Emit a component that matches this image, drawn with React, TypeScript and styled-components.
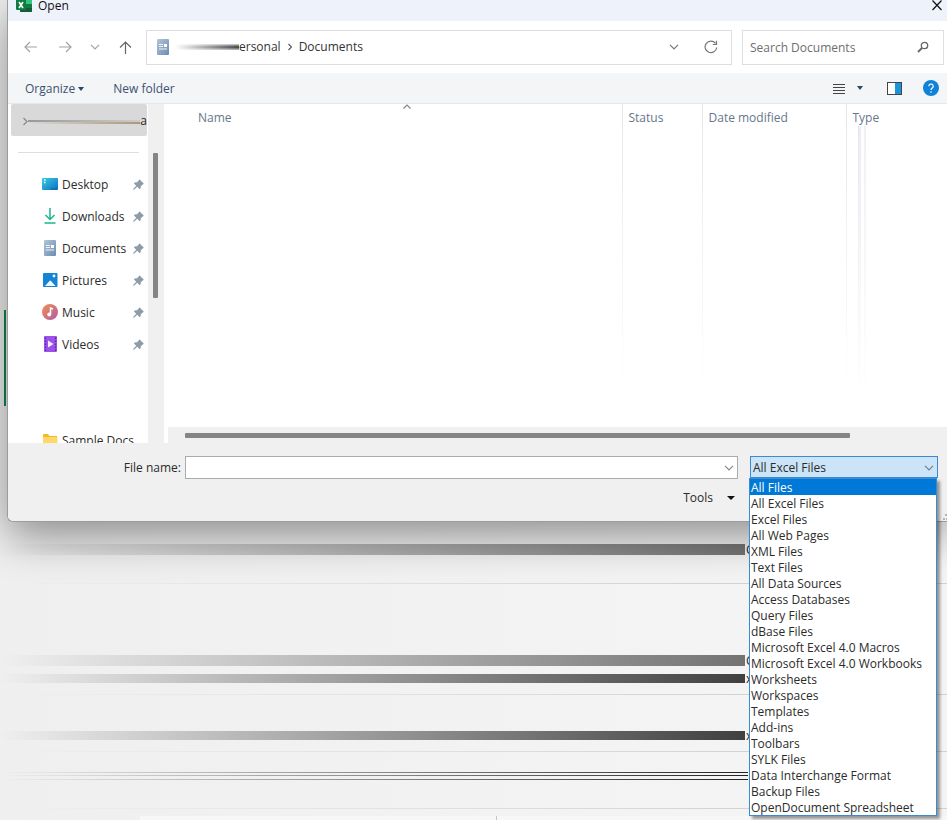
import React from "react";
import styled, { createGlobalStyle } from "styled-components";

const GlobalStyle = createGlobalStyle`
  * { box-sizing: border-box; }
  body {
    margin: 0;
    background: #f2f2f2;
    font-family: "Open Sans", "Noto Sans", sans-serif;
    font-size: 12px;
    line-height: 16px;
    color: #2b2b2b;
  }
  button, input, select { font: inherit; color: inherit; }
  svg { display: block; flex: none; }
`;

const Page = styled.div`
  min-height: 100vh;
  display: flex;
  flex-direction: column;
  overflow: hidden;
  background: linear-gradient(90deg, #efefef, #f4f4f4 80%);
`;

const WindowRow = styled.div`
  display: flex;
`;

const Gutter = styled.div`
  width: 7px;
  display: flex;
  align-items: flex-start;
  justify-content: flex-end;
  padding: 310px 1px 0 0;
`;

const SelectionEdge = styled.div`
  position: relative;
  z-index: 3;
  width: 2px;
  height: 96px;
  background: #0f6b3c;
`;

const Dialog = styled.main`
  position: relative;
  z-index: 2;
  flex: 1;
  min-width: 0;
  background: #fff;
  border-left: 1px solid #9c9c9c;
  border-bottom: 1px solid #9c9c9c;
  border-bottom-left-radius: 6px;
  box-shadow: 0 14px 44px rgba(0, 0, 0, 0.42);
`;

const TitleBar = styled.header`
  display: flex;
  align-items: flex-start;
  height: 21px;
  padding: 0 5px 0 8px;
  background: #eef2fa;
  color: #111;
`;

const Title = styled.h1`
  flex: 1;
  margin: 0 0 0 6px;
  font-size: 12px;
  line-height: 12px;
  font-weight: 400;
`;

const IconButton = styled.button<{ $w?: number }>`
  display: flex;
  flex: none;
  align-items: center;
  justify-content: center;
  width: ${(p) => (p.$w ? `${p.$w}px` : "auto")};
  padding: 0;
  border: 0;
  background: none;
`;

const NavBar = styled.nav`
  display: flex;
  align-items: center;
  height: 52px;
  padding: 0 3px 0 6px;
`;

const NavButtons = styled.div`
  display: flex;
`;

const FieldBox = styled.div<{ $grow?: boolean }>`
  display: flex;
  align-items: center;
  height: 35px;
  border: 1px solid #dedede;
  background: #fff;
  ${(p) =>
    p.$grow
      ? "flex: 1; margin: 0 10px 0 2px; padding-left: 8px;"
      : "width: 202px; padding: 0 14px 0 7px;"}
`;

const Crumb = styled.a`
  color: #333;
  text-decoration: none;
`;

const CrumbSmear = styled.div`
  width: 64px;
  height: 6px;
  margin-left: 4px;
  background: linear-gradient(90deg, transparent, #333);
  mask-image: linear-gradient(180deg, rgba(0, 0, 0, 0.2), #000 50%, rgba(0, 0, 0, 0.3));
`;

const Breadcrumbs = styled.div`
  display: flex;
  flex: 1;
  align-items: center;
  gap: 7px;
`;

const SearchInput = styled.input`
  flex: 1;
  min-width: 0;
  padding: 2px 0 0;
  border: 0;
  outline: 0;
  background: none;
  &::placeholder {
    color: #6e6e6e;
    opacity: 1;
  }
`;

const Toolbar = styled.div`
  display: flex;
  align-items: center;
  height: 31px;
  padding: 0 4px 0 17px;
  background: #f4f5f7;
  border-bottom: 1px solid #e6e8eb;
`;

const TextButton = styled.button<{ $dark?: boolean }>`
  display: flex;
  align-items: center;
  gap: ${(p) => (p.$dark ? 14 : 3)}px;
  padding: ${(p) => (p.$dark ? 0 : 2)}px 0 0;
  border: 0;
  background: none;
  color: ${(p) => (p.$dark ? "#2b2b2b" : "#3c5273")};
`;

const ToolbarStart = styled.div`
  display: flex;
  flex: 1;
  gap: 29px;
`;

const ToolbarEnd = styled.div`
  display: flex;
  align-items: center;
`;

const Body = styled.div`
  display: flex;
  height: 339px;
`;

const Sidebar = styled.aside`
  width: 140px;
  overflow: hidden;
`;

const CurrentFolder = styled.button`
  display: flex;
  align-items: center;
  width: 136px;
  height: 32px;
  margin-left: 3px;
  padding: 2px 0 0 12px;
  border: 0;
  border-radius: 2px;
  background: #d9d9d9;
`;

const FolderSmear = styled.span`
  flex: 1;
  height: 5px;
  background:
    linear-gradient(90deg, #999, #ccc) 0 1px / 100% 2px no-repeat,
    linear-gradient(90deg, #d9d9d9, #ab9a78) 0 3px / 100% 2px no-repeat;
`;

const Separator = styled.hr`
  height: 1px;
  margin: 16px 9px 15px 10px;
  border: 0;
  background: #dedede;
`;

const PlaceList = styled.ul`
  margin: 0;
  padding: 0;
  list-style: none;
`;

const PlaceItem = styled.li<{ $gap?: boolean }>`
  margin-top: ${(p) => (p.$gap ? 64 : 0)}px;
`;

const PlaceLink = styled.a`
  display: flex;
  align-items: center;
  height: 32px;
  padding: 0 4px 0 34px;
  gap: 4px;
  color: #2b2b2b;
  text-decoration: none;
`;

const PlaceName = styled.span`
  flex: 1;
  min-width: 0;
  padding-top: 2px;
  white-space: nowrap;
`;

const ScrollStrip = styled.div`
  width: 16px;
  padding: 49px 5px 0;
  background: #f0f0f0;
`;

const VerticalThumb = styled.div`
  width: 5px;
  height: 145px;
  background: #858585;
  border-radius: 1px;
`;

const FilePane = styled.section`
  display: flex;
  flex: 1;
  flex-direction: column;
  min-width: 0;
  margin-left: 4px;
`;

const FileTable = styled.table`
  width: 100%;
  table-layout: fixed;
  border-collapse: collapse;
`;

const TableArea = styled.div`
  height: 323px;
`;

const HeadCell = styled.th<{ $line?: boolean }>`
  position: relative;
  height: 22px;
  padding: 6px 0 0 6px;
  line-height: 16px;
  border-left: ${(p) => (p.$line ? "1px solid #e8e8e8" : "0")};
  color: #67778a;
  font-weight: 400;
  text-align: left;
  vertical-align: top;
`;

const SortMark = styled.span`
  position: absolute;
  top: 0;
  left: 50%;
  margin-left: -4px;
`;

const EmptyCell = styled.td<{ $line?: boolean; $smear?: boolean }>`
  height: 270px;
  padding: 0;
  background-repeat: no-repeat;
  background-image: ${(p) =>
    [
      p.$line || p.$smear ? "linear-gradient(#e8e8e8, #fff)" : "",
      p.$smear ? "linear-gradient(#e9e4e8, #fff), linear-gradient(#e8eef6, #fff), linear-gradient(#f0f0f0, #fff)" : "",
    ]
      .filter(Boolean)
      .join(", ") || "none"};
  background-size: 1px 100%, 1px 100%, 2px 100%, 2px 100%;
  background-position: 0 0, 12px 0, 13px 0, 18px 0;
`;

const HorizontalStrip = styled.div`
  height: 16px;
  padding: 6px 97px 0 17px;
  background: #f0f0f0;
`;

const HorizontalThumb = styled.div`
  height: 5px;
  background: #858585;
  border-radius: 1px;
`;

const Footer = styled.footer`
  position: relative;
  height: 78px;
  padding: 13px 9px 0 0;
  background: #f0f0f0;
  border-bottom-left-radius: 6px;
`;

const FooterRow = styled.div`
  display: flex;
`;

const FileLabel = styled.label`
  width: 177px;
  padding-right: 4px;
  line-height: 23px;
  text-align: right;
`;

const NameBox = styled.div`
  display: flex;
  flex: 1;
  height: 23px;
  margin-right: 12px;
  padding-right: 3px;
  border: 1px solid #ababab;
  background: #fff;
`;

const NameInput = styled.input`
  flex: 1;
  min-width: 0;
  padding: 0 4px;
  border: 0;
  outline: 0;
  background: none;
`;

const TypePicker = styled.div`
  position: relative;
  width: 188px;
`;

const TypeSelect = styled.select`
  display: block;
  width: 100%;
  height: 22px;
  padding: 2px 20px 0 2px;
  border: 1px solid #3c8ad0;
  border-radius: 0;
  outline: 0;
  appearance: none;
  background: #cce4f7;
`;

const SelectArrow = styled.span`
  position: absolute;
  top: 9px;
  right: 4px;
  pointer-events: none;
`;

const TypeList = styled.ul`
  position: absolute;
  top: 22px;
  left: -1px;
  width: 100%;
  margin: 0;
  padding: 0;
  border: 1px solid #3c8ad0;
  background: #fff;
  box-shadow: 3px 3px 3px rgba(0, 0, 0, 0.4);
  list-style: none;
`;

const TypeOption = styled.li<{ $active?: boolean }>`
  height: 16px;
  padding-left: 1px;
  line-height: 18px;
  white-space: nowrap;
  background: ${(p) => (p.$active ? "#0078d7" : "transparent")};
  color: ${(p) => (p.$active ? "#fff" : "#2b2b2b")};
`;

const ToolsRow = styled.div`
  display: flex;
  justify-content: flex-end;
  padding: 11px 203px 0 0;
`;

const Grip = styled.span`
  position: absolute;
  right: 0;
  bottom: 1px;
`;

const Sheet = styled.section`
  position: relative;
  z-index: 1;
  flex: 1;
  display: flex;
  flex-direction: column;
`;

const SheetRow = styled.div<{ $h: number; $top: number }>`
  display: flex;
  flex-direction: column;
  gap: 8px;
  height: ${(p) => p.$h}px;
  padding-top: ${(p) => p.$top}px;
  background: linear-gradient(90deg, transparent, #d2d2d2 80%) 0 100% / 100% 1px no-repeat;
`;

const SmearRow = styled.div<{ $h: number }>`
  display: flex;
  align-items: center;
  height: ${(p) => p.$h}px;
`;

const Smear = styled.div<{ $tone: string }>`
  flex: 1;
  height: 100%;
  background: linear-gradient(90deg, transparent, ${(p) => p.$tone});
`;

const CutLetter = styled.span`
  width: 202px;
  padding-left: 1px;
  line-height: 18px;
  color: #222;
`;

const Strokes = styled.div`
  height: 8px;
  margin-right: 199px;
  background:
    linear-gradient(90deg, transparent, #222) 0 0 / 100% 1px no-repeat,
    linear-gradient(90deg, transparent, #222) 0 3px / 100% 1px no-repeat,
    linear-gradient(90deg, transparent, #222) 0 7px / 100% 1px no-repeat;
`;

const LowerPanel = styled.div`
  display: flex;
  flex: 1;
  min-height: 4px;
  margin: 7px 0 0 140px;
  background: #f7f7f7;
`;

const PanelColumn = styled.div`
  width: 357px;
  border-right: 1px solid #c4c4c4;
`;

const ExcelLogo = () => (
  <svg width="16" height="12" viewBox="0 4 16 12" aria-hidden="true">
    <rect x="4" y="0" width="12" height="16" rx="1" fill="#21a366" />
    <path d="M10 0h5a1 1 0 0 1 1 1v7h-6z" fill="#33c481" />
    <path d="M10 8h6v4h-6z" fill="#107c41" />
    <path d="M4 12h12v3a1 1 0 0 1-1 1H5a1 1 0 0 1-1-1z" fill="#185c37" />
    <rect x="0" y="3" width="10" height="11" rx="1" fill="#107c41" />
    <path d="M3 6l4 6M7 6l-4 6" stroke="#fff" strokeWidth="1.6" />
  </svg>
);

const Stroke = ({ w, h, d, color = "#777", sw = 1.2 }: { w: number; h: number; d: string; color?: string; sw?: number }) => (
  <svg width={w} height={h} viewBox={`0 0 ${w} ${h}`} fill="none" stroke={color} strokeWidth={sw} aria-hidden="true">
    <path d={d} />
  </svg>
);

const ChevronDown = ({ color }: { color?: string }) => <Stroke w={10} h={6} d="M1 .8l4 4 4-4" color={color} />;

const Caret = ({ color, w = 6 }: { color: string; w?: number }) => (
  <svg width={w} height="4" viewBox="0 0 8 4" preserveAspectRatio="none" aria-hidden="true">
    <path d="M0 0h8L4 4z" fill={color} />
  </svg>
);

const DocumentIcon = () => (
  <svg width="16" height="16" viewBox="0 0 16 16" aria-hidden="true">
    <defs>
      <linearGradient id="doc" x1="0" y1="0" x2="1" y2="1">
        <stop offset="0" stopColor="#b3c5d8" />
        <stop offset="1" stopColor="#6b8cb2" />
      </linearGradient>
    </defs>
    <rect x="2" y="0" width="12" height="16" rx="1" fill="url(#doc)" />
    <path d="M4 5.500h4M4 7.500h4M4 10h8" stroke="#eef3f8" strokeWidth="1.200" />
    <rect x="9" y="5" width="3" height="3" fill="#fff" />
  </svg>
);

const DesktopIcon = () => (
  <svg width="16" height="16" viewBox="0 0 16 16" aria-hidden="true">
    <defs>
      <linearGradient id="desk" x1="0" y1="0" x2="1" y2="1">
        <stop offset="0" stopColor="#35d0e0" />
        <stop offset="1" stopColor="#0f6cc4" />
      </linearGradient>
    </defs>
    <rect x="0" y="2" width="16" height="12" rx="1" fill="url(#desk)" />
    <path d="M2 4h1.500M2 6.500h1.500" stroke="#fff" strokeWidth="1.400" />
    <path d="M9 13h1.500M11.500 13h1M13.500 13h1" stroke="#0b4d92" />
  </svg>
);

const DownloadIcon = () => (
  <svg width="16" height="16" viewBox="0 0 16 16" fill="none" stroke="#1db58c" strokeWidth="1.500" aria-hidden="true">
    <path d="M8 0v11.500M3.500 7L8 11.500 12.500 7M2.500 15h11" />
  </svg>
);

const PictureIcon = () => (
  <svg width="16" height="16" viewBox="0 0 16 16" aria-hidden="true">
    <rect x="1" y="1" width="14.500" height="14" rx="1" fill="#1484d6" />
    <path d="M3 14l4.500-5a1 1 0 0 1 1.500 0L13.500 14z" fill="#f2f8fd" />
    <circle cx="12" cy="4" r="1.400" fill="#fff" />
  </svg>
);

const MusicIcon = () => (
  <svg width="16" height="16" viewBox="0 0 16 16" aria-hidden="true">
    <defs>
      <linearGradient id="music" x1="0" y1="0" x2="1" y2="1">
        <stop offset="0" stopColor="#f09050" />
        <stop offset="1" stopColor="#b45aa8" />
      </linearGradient>
    </defs>
    <circle cx="8" cy="8" r="8" fill="url(#music)" />
    <path d="M8.500 10.500V4l2.500 1" fill="none" stroke="#fff" strokeWidth="1.500" />
    <circle cx="7.200" cy="10.500" r="1.900" fill="#fff" />
  </svg>
);

const VideoIcon = () => (
  <svg width="16" height="16" viewBox="0 0 16 16" aria-hidden="true">
    <rect x="2" y="0" width="13" height="16" rx="1" fill="#9a52e8" />
    <path d="M3.500 1.500v14M13.500 1.500v14" stroke="#5a20a8" strokeWidth="1.200" strokeDasharray="1.500 1.500" />
    <path d="M6 4.500L11.500 8 6 11.500z" fill="#f4ecfc" />
  </svg>
);

const FolderIcon = () => (
  <svg width="16" height="16" viewBox="0 0 16 16" aria-hidden="true">
    <path d="M1 3a1 1 0 0 1 1-1h4l1.500 2H15v5H1z" fill="#f5b921" />
    <path d="M1 5h13.500a1 1 0 0 1 1 1v8H1z" fill="#ffd869" />
  </svg>
);

const PinIcon = () => (
  <svg width="11" height="11" viewBox="0 0 11 11" aria-hidden="true">
    <path
      d="M6.300 .3L10.800 4.600 9.800 5.400 7.900 7.200 7.500 9.700 6.300 9.900 4.200 7.800 1 10.800 .2 10.800 .2 10.100 3.200 6.800 1 4.600 1.400 3.500 4.100 3.200 5.700 1.400z"
      fill="#8f9ba6"
    />
  </svg>
);

const places = [
  { name: "Desktop", icon: <DesktopIcon /> },
  { name: "Downloads", icon: <DownloadIcon /> },
  { name: "Documents", icon: <DocumentIcon /> },
  { name: "Pictures", icon: <PictureIcon /> },
  { name: "Music", icon: <MusicIcon /> },
  { name: "Videos", icon: <VideoIcon /> },
];

const fileTypes = [
  "All Files",
  "All Excel Files",
  "Excel Files",
  "All Web Pages",
  "XML Files",
  "Text Files",
  "All Data Sources",
  "Access Databases",
  "Query Files",
  "dBase Files",
  "Microsoft Excel 4.0 Macros",
  "Microsoft Excel 4.0 Workbooks",
  "Worksheets",
  "Workspaces",
  "Templates",
  "Add-ins",
  "Toolbars",
  "SYLK Files",
  "Data Interchange Format",
  "Backup Files",
  "OpenDocument Spreadsheet",
];

export default function App() {
  return (
    <Page>
      <GlobalStyle />
      <WindowRow>
        <Gutter>
          <SelectionEdge />
        </Gutter>
        <Dialog>
          <TitleBar>
            <ExcelLogo />
            <Title>Open</Title>
            <IconButton aria-label="Close">
              <Stroke w={10} h={11} d="M.5 .5l9 9.500M9.500 .5l-9 9.500" color="#111" />
            </IconButton>
          </TitleBar>

          <NavBar>
            <NavButtons>
              <IconButton $w={32} aria-label="Back">
                <Stroke w={13} h={12} d="M13 6H1M6 1L1 6l5 5" color="#a3a3a3" />
              </IconButton>
              <IconButton $w={38} aria-label="Forward">
                <Stroke w={13} h={12} d="M0 6h12M7 1l5 5-5 5" color="#a3a3a3" />
              </IconButton>
              <IconButton $w={22} aria-label="Recent locations">
                <ChevronDown color="#a3a3a3" />
              </IconButton>
              <IconButton $w={38} aria-label="Up">
                <Stroke w={13} h={13} d="M6.500 13V1M1 6.500L6.500 1 12 6.500" color="#666" />
              </IconButton>
            </NavButtons>
            <FieldBox $grow>
              <DocumentIcon />
              <CrumbSmear />
              <Breadcrumbs>
                <Crumb href="#personal">ersonal</Crumb>
                <Stroke w={4} h={8} d="M.5 1l3 3-3 3" color="#555" />
                <Crumb href="#documents">Documents</Crumb>
              </Breadcrumbs>
              <IconButton $w={34} aria-label="Previous locations">
                <ChevronDown />
              </IconButton>
              <IconButton $w={40} aria-label="Refresh">
                <Stroke w={14} h={14} d="M12.700 7.500A5.800 5.800 0 1 1 11.500 3.300M12.500 .8v3.700H8.800" color="#777" />
              </IconButton>
            </FieldBox>
            <FieldBox>
              <SearchInput placeholder="Search Documents" aria-label="Search Documents" />
              <svg width="12" height="12" viewBox="0 0 12 12" fill="none" stroke="#666" aria-hidden="true">
                <circle cx="7.500" cy="4.500" r="3.200" strokeWidth="1.300" />
                <path d="M5 7L1 11" strokeWidth="1.800" />
              </svg>
            </FieldBox>
          </NavBar>

          <Toolbar>
            <ToolbarStart>
              <TextButton>
                Organize
                <Caret color="#2c436a" />
              </TextButton>
              <TextButton>New folder</TextButton>
            </ToolbarStart>
            <ToolbarEnd>
              <IconButton $w={22} aria-label="Change view">
                <Stroke w={12} h={11} d="M0 1.500h12M0 4.500h12M0 7.500h12M0 10.500h12" color="#444" sw={1} />
              </IconButton>
              <IconButton $w={20} aria-label="More view options">
                <Caret color="#2c436a" />
              </IconButton>
              <IconButton $w={48} aria-label="Preview pane">
                <svg width="15" height="13" viewBox="0 0 15 13" aria-hidden="true">
                  <rect x=".5" y=".5" width="14" height="12" fill="#fff" stroke="#444" />
                  <rect x="8" y="1" width="6" height="11" fill="#1a94dc" />
                </svg>
              </IconButton>
              <IconButton $w={25} aria-label="Help">
                <svg width="16" height="16" viewBox="0 0 16 16" aria-hidden="true">
                  <circle cx="8" cy="8" r="8" fill="#0f83d8" />
                  <path d="M5.800 6.200a2.200 2.200 0 1 1 3.400 1.900C8.400 8.600 8 9 8 10" fill="none" stroke="#fff" strokeWidth="1.200" />
                  <circle cx="8" cy="12" r=".8" fill="#fff" />
                </svg>
              </IconButton>
            </ToolbarEnd>
          </Toolbar>

          <Body>
            <Sidebar>
              <CurrentFolder>
                <Stroke w={5} h={9} d="M.5 1l3.500 3.500L.5 8" color="#888" />
                <FolderSmear />
                a
              </CurrentFolder>
              <Separator />
              <PlaceList>
                {places.map((place) => (
                  <PlaceItem key={place.name}>
                    <PlaceLink href={`#${place.name}`}>
                      {place.icon}
                      <PlaceName>{place.name}</PlaceName>
                      <PinIcon />
                    </PlaceLink>
                  </PlaceItem>
                ))}
                <PlaceItem $gap>
                  <PlaceLink href="#Sample">
                    <FolderIcon />
                    <PlaceName>Sample Docs</PlaceName>
                  </PlaceLink>
                </PlaceItem>
              </PlaceList>
            </Sidebar>
            <ScrollStrip>
              <VerticalThumb />
            </ScrollStrip>
            <FilePane>
              <TableArea>
                <FileTable>
                  <colgroup>
                    <col width="24" />
                    <col />
                    <col width="80" />
                    <col width="144" />
                    <col width="101" />
                  </colgroup>
                  <thead>
                    <tr>
                      <HeadCell />
                      <HeadCell>
                        Name
                        <SortMark>
                          <Stroke w={8} h={5} d="M.5 4.500L4 1l3.500 3.500" color="#888" />
                        </SortMark>
                      </HeadCell>
                      <HeadCell $line>Status</HeadCell>
                      <HeadCell $line>Date modified</HeadCell>
                      <HeadCell $line>Type</HeadCell>
                    </tr>
                  </thead>
                  <tbody>
                    <tr>
                      <EmptyCell />
                      <EmptyCell />
                      <EmptyCell $line />
                      <EmptyCell $line />
                      <EmptyCell $smear />
                    </tr>
                  </tbody>
                </FileTable>
              </TableArea>
              <HorizontalStrip>
                <HorizontalThumb />
              </HorizontalStrip>
            </FilePane>
          </Body>

          <Footer>
            <FooterRow>
              <FileLabel htmlFor="file-name">File name:</FileLabel>
              <NameBox>
                <NameInput id="file-name" />
                <IconButton aria-label="Recent file names">
                  <ChevronDown color="#888" />
                </IconButton>
              </NameBox>
              <TypePicker>
                <TypeSelect aria-label="File type" defaultValue="All Excel Files">
                  {fileTypes.map((t) => (
                    <option key={t}>{t}</option>
                  ))}
                </TypeSelect>
                <SelectArrow>
                  <ChevronDown color="#6f7f8e" />
                </SelectArrow>
                <TypeList role="listbox" aria-label="File types">
                  {fileTypes.map((t, i) => (
                    <TypeOption key={t} role="option" aria-selected={i === 0} $active={i === 0}>
                      {t}
                    </TypeOption>
                  ))}
                </TypeList>
              </TypePicker>
            </FooterRow>
            <ToolsRow>
              <TextButton $dark>
                Tools
                <Caret color="#111" w={8} />
              </TextButton>
            </ToolsRow>
            <Grip>
              <svg width="4" height="6" viewBox="0 0 4 6" fill="#b5b5b5" aria-hidden="true">
                <path d="M2 0h2v2H2zM0 4h2v2H0zM3 4h1v2H3z" />
              </svg>
            </Grip>
          </Footer>
        </Dialog>
      </WindowRow>

      <Sheet>
        <SheetRow $h={62} $top={22}>
          <SmearRow $h={11}>
            <Smear $tone="#757575" />
            <CutLetter>C</CutLetter>
          </SmearRow>
        </SheetRow>
        <SheetRow $h={111} $top={71}>
          <SmearRow $h={11}>
            <Smear $tone="#737373" />
            <CutLetter>C</CutLetter>
          </SmearRow>
          <SmearRow $h={9}>
            <Smear $tone="#404040" />
            <CutLetter>x</CutLetter>
          </SmearRow>
        </SheetRow>
        <SheetRow $h={57} $top={36}>
          <SmearRow $h={9}>
            <Smear $tone="#404040" />
            <CutLetter>x</CutLetter>
          </SmearRow>
        </SheetRow>
        <SheetRow $h={57} $top={20}>
          <Strokes />
        </SheetRow>
        <LowerPanel>
          <PanelColumn />
        </LowerPanel>
      </Sheet>
    </Page>
  );
}
